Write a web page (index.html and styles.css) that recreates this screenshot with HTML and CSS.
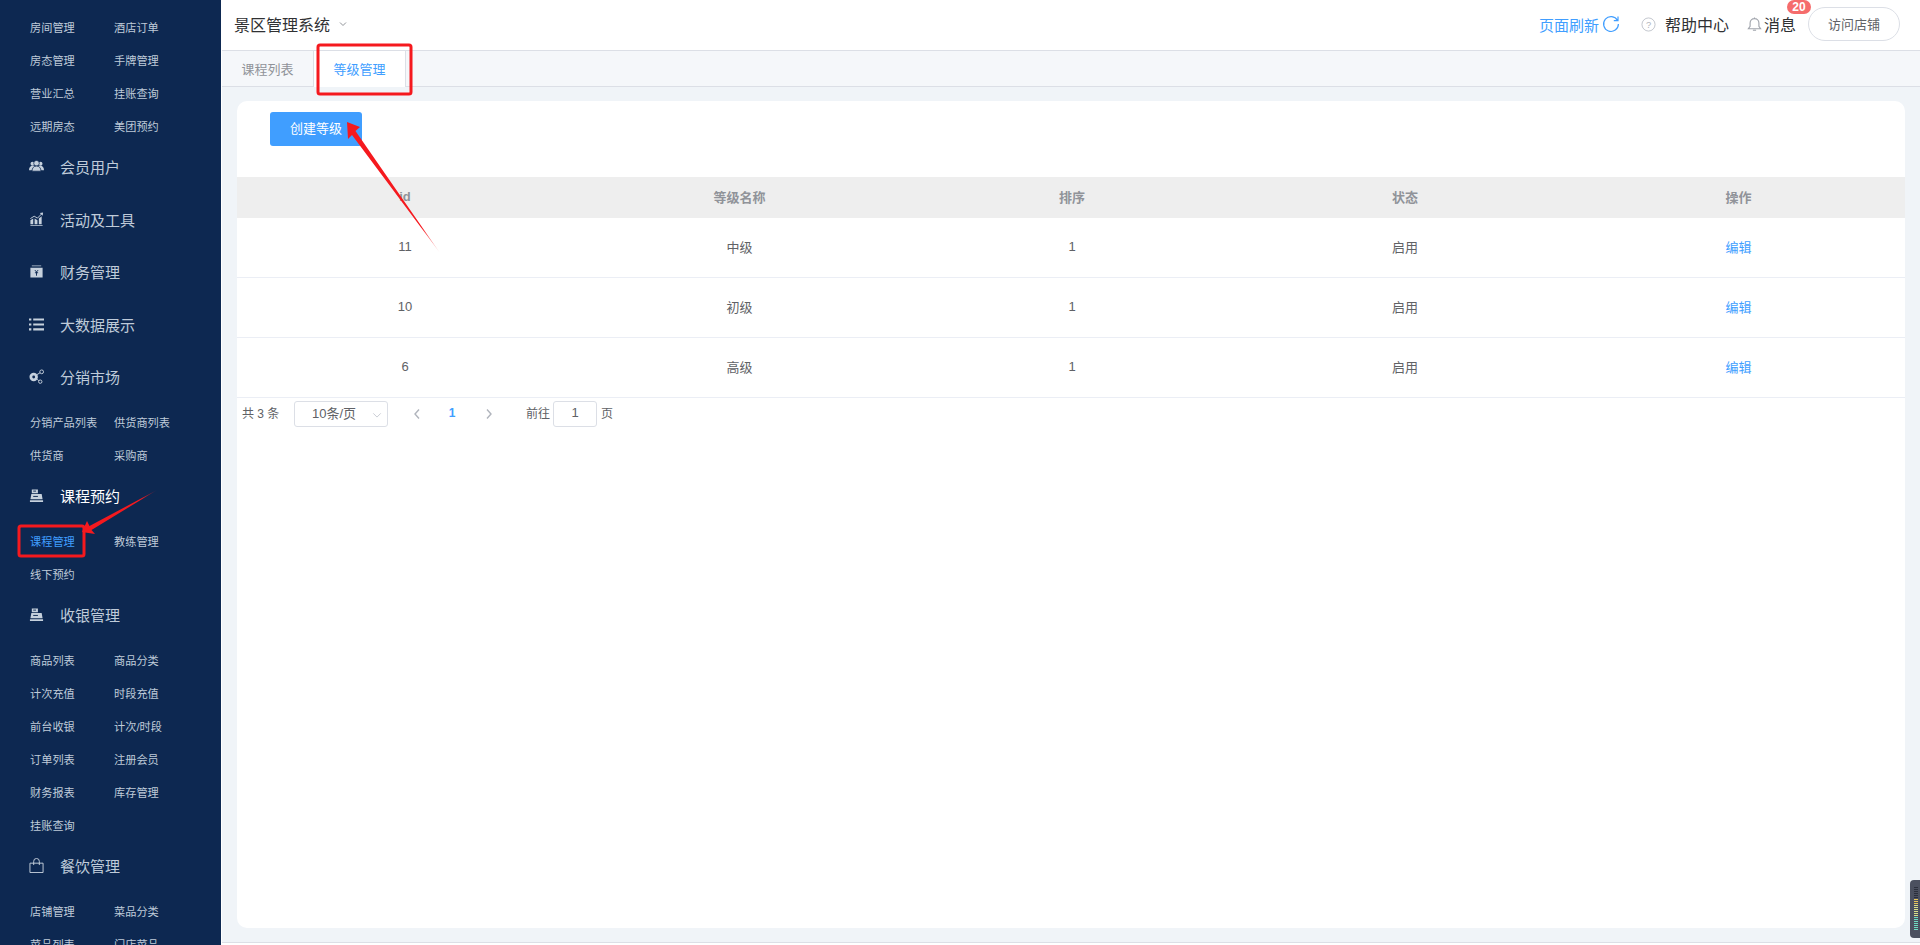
FILE: index.html
```html
<!DOCTYPE html>
<html lang="zh">
<head>
<meta charset="utf-8">
<title>景区管理系统</title>
<link rel="stylesheet" href="styles.css">
</head>
<body>
<div class="app">
  <aside class="sidebar">
    <div class="sub"><a>房间管理</a><a>酒店订单</a><a>房态管理</a><a>手牌管理</a><a>营业汇总</a><a>挂账查询</a><a>远期房态</a><a>美团预约</a></div>
    <div class="head"><svg class="ico" viewBox="0 0 16 16"><circle cx="3.800" cy="5" r="2.200"/><circle cx="12.200" cy="5" r="2.200"/><path d="M0 12c0-3 1.500-4.800 3.800-4.800S7.600 9 7.600 12zM8.400 12c0-3 1.500-4.800 3.800-4.800S16 9 16 12z"/><circle class="front" cx="8" cy="4.500" r="3"/><path class="front" d="M3.200 13c0-3.500 2-5.500 4.800-5.500s4.800 2 4.800 5.500z"/></svg><span>会员用户</span></div>
    <div class="head"><svg class="ico" viewBox="0 0 16 16"><path d="M1.500 15v-1h13v1zM1.500 13V8.800l3-1.800v6zM6 13V7l3 1.800V13zM10.500 13V7l3-2.500V13z"/><path class="line" d="M1.500 7 5.500 4.500l3.500 2 5-5"/><path d="M11.500 1 15 .5l-.4 3.500z"/></svg><span>活动及工具</span></div>
    <div class="head"><svg class="ico" viewBox="0 0 16 16"><path d="M3 1.500h10v1H3zM1.500 4h13v10.500h-13z"/><path class="cut" d="M6.300 6.500 8 8.500l1.700-2M6.300 9.300h3.400M8 8.500V12.500"/></svg><span>财务管理</span></div>
    <div class="head"><svg class="ico" viewBox="0 0 16 16"><path d="M0 1.500h2.500v2.300H0zM4.500 1.500H16v2.300H4.500zM0 6.800h2.500v2.300H0zM4.500 6.800H16v2.300H4.500zM0 12.100h2.500v2.300H0zM4.500 12.100H16v2.300H4.500z"/></svg><span>大数据展示</span></div>
    <div class="head"><svg class="ico" viewBox="0 0 16 16"><circle cx="5" cy="8.500" r="4.500"/><circle class="cut-f" cx="5" cy="8.500" r="1.500"/><circle class="ring" cx="13.500" cy="3" r="2"/><circle class="ring" cx="12" cy="13.500" r="1.800"/><path class="line" d="M8.500 6 11.800 4M8.700 11l1.800 1.500"/></svg><span>分销市场</span></div>
    <div class="sub"><a>分销产品列表</a><a>供货商列表</a><a>供货商</a><a>采购商</a></div>
    <div class="head is-active"><svg class="ico" viewBox="0 0 16 16"><path d="M3 1.500h6.500v4H3zM2.500 6.500h11L14.500 12h-13zM1 13h14v1.800H1z"/><path class="cut" d="M4.500 3.300h3M4.500 9h5"/></svg><span>课程预约</span></div>
    <div class="sub"><a class="is-active">课程管理</a><a>教练管理</a><a>线下预约</a></div>
    <div class="head"><svg class="ico" viewBox="0 0 16 16"><path d="M3 1.500h6.500v4H3zM2.500 6.500h11L14.500 12h-13zM1 13h14v1.800H1z"/><path class="cut" d="M4.500 3.300h3M4.500 9h5"/></svg><span>收银管理</span></div>
    <div class="sub"><a>商品列表</a><a>商品分类</a><a>计次充值</a><a>时段充值</a><a>前台收银</a><a>计次/时段</a><a>订单列表</a><a>注册会员</a><a>财务报表</a><a>库存管理</a><a>挂账查询</a></div>
    <div class="head"><svg class="ico" viewBox="0 0 16 16"><path class="line" d="M1 5.500h14V15.500H1zM5 7.500V3.500a3 3 0 0 1 6 0v4"/></svg><span>餐饮管理</span></div>
    <div class="sub"><a>店铺管理</a><a>菜品分类</a><a>菜品列表</a><a>门店菜品</a></div>
  </aside>

  <main class="main">
    <header class="topbar">
      <div class="brand"><span>景区管理系统</span>
        <svg class="chev" viewBox="0 0 10 10"><path d="M2 3.500 5 6.500l3-3"/></svg>
      </div>
      <div class="tools">
        <a class="refresh">页面刷新<svg class="refresh-ico" viewBox="0 0 18 18"><path d="M15.500 5.500A7.400 7.400 0 1 0 16.400 9M16 1.500v4.200h-4.200"/></svg></a>
        <svg class="help-ico" viewBox="0 0 16 16"><circle cx="8" cy="8" r="7"/><text x="8" y="11.500">?</text></svg>
        <a class="help">帮助中心</a>
        <svg class="bell" viewBox="0 0 16 16"><path d="M1.500 13h13l-1.800-2.500V7A4.700 4.700 0 0 0 3.300 7v3.500zM6.300 14.600h3.400M8 1v1.300"/></svg>
        <a class="msg">消息<span class="badge">20</span></a>
        <button class="visit">访问店铺</button>
      </div>
    </header>

    <nav class="tabs">
      <a class="tab">课程列表</a>
      <a class="tab is-active">等级管理</a>
    </nav>

    <section class="content">
      <div class="card">
        <button class="create">创建等级</button>
        <table class="grid">
          <thead><tr><th>id</th><th>等级名称</th><th>排序</th><th>状态</th><th>操作</th></tr></thead>
          <tbody>
            <tr><td>11</td><td>中级</td><td>1</td><td>启用</td><td><a class="link">编辑</a></td></tr>
            <tr><td>10</td><td>初级</td><td>1</td><td>启用</td><td><a class="link">编辑</a></td></tr>
            <tr><td>6</td><td>高级</td><td>1</td><td>启用</td><td><a class="link">编辑</a></td></tr>
          </tbody>
        </table>
        <div class="pager">
          <span class="total">共 3 条</span>
          <span class="size">10条/页<svg class="size-chev" viewBox="0 0 12 12"><path d="M1.500 4 6 8.500 10.500 4"/></svg></span>
          <svg class="nav-arrow prev" viewBox="0 0 10 12"><path d="M7 1.500 3 6l4 4.500"/></svg>
          <span class="num">1</span>
          <svg class="nav-arrow next" viewBox="0 0 10 12"><path d="M3 1.500 7 6l-4 4.500"/></svg>
          <span class="goto">前往</span>
          <span class="jump">1</span>
          <span class="page-unit">页</span>
        </div>
      </div>
    </section>
    <div class="foot"></div>
  </main>
</div>

<svg class="notes" viewBox="0 0 1920 945">
  <defs>
    <linearGradient id="fade1" gradientUnits="userSpaceOnUse" x1="347" y1="123" x2="440" y2="253"><stop offset="0.8" stop-color="#f5191e"/><stop offset="1" stop-color="#f5191e" stop-opacity="0.15"/></linearGradient>
    <linearGradient id="fade2" gradientUnits="userSpaceOnUse" x1="82" y1="532" x2="157" y2="490"><stop offset="0.8" stop-color="#f5191e"/><stop offset="1" stop-color="#f5191e" stop-opacity="0.15"/></linearGradient>
  </defs>
  <rect class="mark" x="318" y="45" width="93" height="49" rx="2"/>
  <rect class="mark" x="19" y="526" width="65" height="30" rx="2"/>
  <polygon fill="url(#fade1)" points="347,122 360,127 355.500,131 440,253 352,135 348,139"/>
  <polygon fill="url(#fade2)" points="82,532 87,521 89.500,526 157,490 91.500,530 95,534"/>
</svg>

<div class="meter">
  <i class="off"></i><i class="off"></i><i class="off"></i><i class="off"></i><i class="off"></i><i class="off"></i>
  <i class="hi"></i><i class="hi"></i><i class="hi"></i><i class="mid"></i><i class="mid"></i><i class="mid"></i><i class="mid"></i><i class="mid"></i><i class="mid"></i>
  <i class="low"></i><i class="low"></i><i class="low"></i><i class="low"></i><i class="low"></i><i class="low"></i><i class="low"></i>
</div>
</body>
</html>
```

FILE: styles.css
```css
* { box-sizing: border-box; }
html, body { margin: 0; height: 100%; overflow: hidden; background: #fff; }
body { font-family: "Liberation Sans", "Noto Sans CJK SC", sans-serif; font-size: 13px; color: #606266; }
a { text-decoration: none; }
button { font-family: inherit; margin: 0; cursor: pointer; }

.app { display: flex; height: 945px; }

/* sidebar */
.sidebar { width: 221px; flex: none; height: 945px; overflow: hidden; background: #0d2851; padding-top: 8px; color: #bfcbd9; }
.sub { display: grid; grid-template-columns: 84px 84px; grid-auto-rows: 33px; padding: 2px 0 0 30px; margin-bottom: -1.500px; font-size: 11.200px; }
.sub a { display: flex; align-items: center; white-space: nowrap; color: #bfcbd9; }
.sub a.is-active { color: #409eff; }
.head { display: flex; align-items: center; height: 52.500px; padding-left: 29px; font-size: 15px; color: #bfcbd9; }
.head.is-active { color: #fff; }
.ico { width: 15px; height: 15px; margin-right: 16px; flex: none; fill: #c6d1dd; }
.ico .cut { fill: none; stroke: #0d2851; stroke-width: 1; }
.ico .cut-f { fill: #0d2851; }
.ico .front { stroke: #0d2851; stroke-width: .8; }
.ico .ring { fill: none; stroke: #c6d1dd; stroke-width: 1; }
.ico .line { fill: none; stroke: #c6d1dd; stroke-width: 1; }

/* main */
.main { flex: 1; min-width: 0; display: flex; flex-direction: column; padding-left: 1px; }
.topbar { height: 50px; flex: none; display: flex; align-items: center; justify-content: space-between; padding: 0 20px 2px 12px; }
.brand { display: flex; align-items: center; font-size: 16px; color: #303133; }
.chev { width: 10px; height: 10px; margin-left: 8px; fill: none; stroke: #909399; stroke-width: 1; }
.tools { display: flex; align-items: center; }
.refresh { display: flex; align-items: center; font-size: 15px; color: #409eff; }
.refresh-ico { width: 18px; height: 18px; margin-left: 3px; fill: none; stroke: #409eff; stroke-width: 1.200; }
.help-ico { width: 15px; height: 15px; margin-left: 21px; fill: none; stroke: #c0c4cc; stroke-width: 1; }
.help-ico text { font-size: 10px; text-anchor: middle; fill: #b0b4bc; stroke: none; }
.help { font-size: 16px; color: #303133; margin-left: 9px; }
.bell { width: 15px; height: 16px; margin-left: 18px; fill: none; stroke: #a0a4ac; stroke-width: 1.200; }
.msg { position: relative; font-size: 16px; color: #303133; margin-left: 2px; }
.badge { position: absolute; left: 23px; top: -12px; min-width: 24px; height: 14px; padding: 0 4px; border-radius: 8px; background: #f56c6c; color: #fff; font-size: 12px; font-weight: bold; line-height: 15px; text-align: center; }
.visit { width: 92px; height: 34px; margin-left: 12px; border: 1px solid #dcdfe6; border-radius: 17px; background: #fff; color: #606266; font-size: 13px; padding: 0 0 2px; }

.tabs { height: 37px; flex: none; display: flex; background: #f5f7fa; border-top: 1px solid #dcdfe6; border-bottom: 1px solid #dcdfe6; }
.tab { width: 92px; height: 36px; padding-bottom: 2px; display: flex; align-items: center; justify-content: center; color: #909399; border-right: 1px solid #dcdfe6; font-size: 13px; }
.tab.is-active { background: #fff; color: #409eff; }

.content { flex: 1; min-height: 0; background: #f0f4f8; padding: 14px 15px; }
.card { height: 100%; background: #fff; border-radius: 10px; overflow: hidden; padding-top: 11px; }
.create { display: block; width: 92px; height: 34px; margin: 0 0 31px 33px; border: 0; border-radius: 3px; background: #409eff; color: #fff; font-size: 13px; padding: 0 0 3px; }

.grid { width: 100%; border-collapse: collapse; table-layout: fixed; }
.grid th { height: 41px; background: #eee; color: #909399; font-weight: bold; font-size: 13px; text-align: center; padding: 0 0 3px; }
.grid th:nth-child(1) { width: 336px; }
.grid th:nth-child(2) { width: 333px; }
.grid th:nth-child(3) { width: 332px; }
.grid th:nth-child(4) { width: 334px; }
.grid td { height: 60px; text-align: center; padding: 0 0 2px; border-bottom: 1px solid #ebeef5; font-size: 13px; color: #606266; }
.grid tbody tr:first-child td { height: 59px; }
.link { color: #409eff; }

.pager { display: flex; align-items: center; height: 32px; padding-left: 5px; font-size: 12px; color: #606266; }
.total { width: 52px; padding-bottom: 2px; }
.size { position: relative; display: flex; align-items: center; width: 94px; height: 26px; padding: 0 0 2px 17px; border: 1px solid #dcdfe6; border-radius: 3px; font-size: 13px; }
.size-chev { position: absolute; right: 5px; top: 8px; width: 10px; height: 10px; fill: none; stroke: #c0c4cc; stroke-width: 1; }
.nav-arrow { width: 10px; height: 12px; fill: none; stroke: #b0b4bc; stroke-width: 1.400; }
.prev { margin-left: 24px; }
.num { width: 62px; padding-bottom: 2px; padding-right: 2px; text-align: center; color: #409eff; font-weight: bold; font-size: 12px; }
.goto { margin-left: 32px; padding-bottom: 2px; }
.jump { width: 44px; height: 26px; margin-left: 3px; border: 1px solid #dcdfe6; border-radius: 3px; text-align: center; line-height: 22px; font-size: 13px; }
.page-unit { margin-left: 4px; padding-bottom: 2px; }

.foot { height: 3px; flex: none; background: #fff; border-top: 1px solid #dcdfe6; }

/* annotations over the screenshot */
.notes { position: absolute; left: 0; top: 0; width: 1920px; height: 945px; pointer-events: none; }
.mark { fill: none; stroke: #f5191e; stroke-width: 3; }

.meter { position: absolute; right: 0; top: 880px; width: 10px; height: 58px; padding: 7px 2px 0 4px; border-radius: 4px 0 0 4px; background: #4b505f; display: flex; flex-direction: column; gap: 1px; }
.meter i { display: block; height: 1px; background: #2b2f3c; }
.meter .hi { background: #e8c65a; }
.meter .mid { background: #d8e089; }
.meter .low { background: #6fdcc0; }
```
